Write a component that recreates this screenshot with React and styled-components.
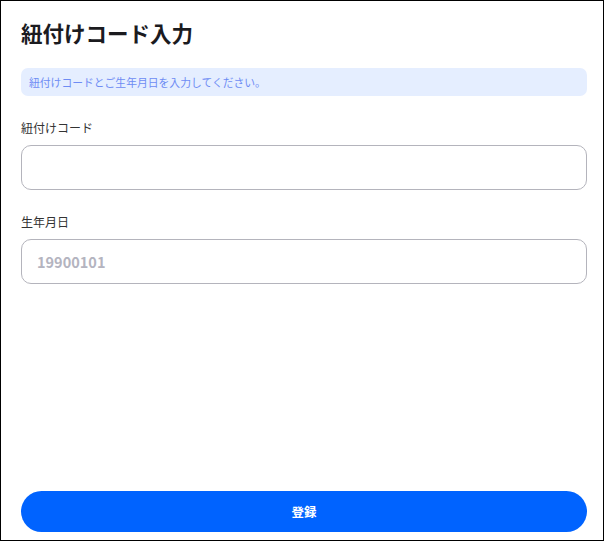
import React from "react";
import styled, { createGlobalStyle } from "styled-components";

const GlobalStyle = createGlobalStyle`
  html, body {
    margin: 0;
    padding: 0;
    background: #fff;
  }
  body {
    font-family: "Noto Sans CJK JP", "Noto Sans", sans-serif;
    color: #222;
  }
  * { box-sizing: border-box; }
`;

const Frame = styled.div`
  width: 604px;
  height: 541px;
  border: 1px solid #000;
  display: flex;
  flex-direction: column;
  padding: 16px 16px 8px 20px;
`;

const Title = styled.h1`
  margin: 0;
  font-size: 21.5px;
  font-weight: 700;
  line-height: 32px;
  color: #1b1b1f;
`;

const Notice = styled.div`
  margin-top: 19px;
  height: 28px;
  display: flex;
  align-items: center;
  padding: 0 8px;
  background: #e5eeff;
  border-radius: 7px;
  font-size: 10.8px;
  color: #6e8cf4;
`;

const Field = styled.div`
  display: flex;
  flex-direction: column;
  margin-top: 24px;
`;

const Label = styled.label`
  font-size: 12px;
  line-height: 16px;
  color: #333;
  margin-bottom: 9px;
`;

const Input = styled.input`
  height: 45px;
  border: 1px solid #b4b4bc;
  border-radius: 10px;
  padding: 0 15px;
  font-family: inherit;
  font-size: 14.5px;
  font-weight: 700;
  color: #222;
  outline: none;
  &::placeholder {
    color: #b4b4bf;
  }
`;

const Submit = styled.button`
  margin-top: auto;
  height: 41px;
  border: none;
  border-radius: 21px;
  background: #0063ff;
  color: #fff;
  font-family: inherit;
  font-size: 12.5px;
  font-weight: 700;
`;

export default function App() {
  return (
    <>
      <GlobalStyle />
      <Frame>
        <Title>紐付けコード入力</Title>
        <Notice>紐付けコードとご生年月日を入力してください。</Notice>
        <Field>
          <Label>紐付けコード</Label>
          <Input type="text" />
        </Field>
        <Field>
          <Label>生年月日</Label>
          <Input type="text" placeholder="19900101" />
        </Field>
        <Submit>登録</Submit>
      </Frame>
    </>
  );
}
